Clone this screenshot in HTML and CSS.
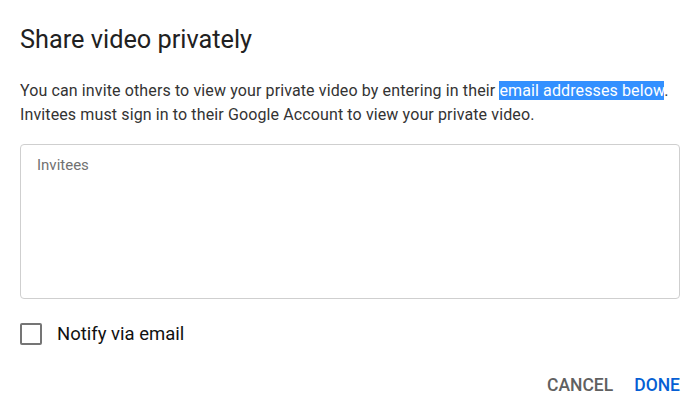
FILE: index.html
```html
<!DOCTYPE html>
<html lang="en">
<head>
  <meta charset="UTF-8" />
  <title>Share video privately</title>
  <link rel="stylesheet" href="styles.css">
</head>
<body>
  <div class="dialog">
    <h1 class="titulo">Share video privately</h1>
    <p class="descricao">You can invite others to view your private video by entering in their <span class="selecao">email addresses below</span>. Invitees must sign in to their Google Account to view your private video.</p>
    <div class="convidados">
      <textarea placeholder="Invitees"></textarea>
    </div>
    <label class="notificar">
      <span class="caixa"></span>
      <span>Notify via email</span>
    </label>
    <div class="acoes">
      <button class="cancelar">CANCEL</button>
      <button class="pronto">DONE</button>
    </div>
  </div>
</body>
</html>
```

FILE: styles.css
```css
body {
  margin: 0;
  background: #fff;
  font-family: Roboto, "Liberation Sans", Arial, sans-serif;
}

.dialog {
  padding: 24px 18px 0 20px;
}

.titulo {
  margin: 0;
  font-size: 25.3px;
  line-height: 32px;
  font-weight: 400;
  color: #212121;
}

.descricao {
  margin: 23px 0 0;
  font-size: 16px;
  letter-spacing: 0.12px;
  line-height: 24px;
  color: #333;
}

.selecao {
  background: #3390ff;
  color: #fff;
}

.convidados {
  margin-top: 17px;
  height: 155px;
  border: 1px solid #cfcfcf;
  border-radius: 4px;
  box-sizing: border-box;
  padding: 11px 16px;
}

.convidados textarea {
  width: 100%;
  height: 100%;
  border: none;
  outline: none;
  resize: none;
  padding: 0;
  font-family: inherit;
  font-size: 15px;
  line-height: 18px;
  color: #333;
}

.convidados textarea::placeholder {
  color: #717171;
}

.notificar {
  display: flex;
  align-items: center;
  gap: 15px;
  margin-top: 24px;
  font-size: 18.5px;
  color: #111;
}

.caixa {
  width: 18px;
  height: 18px;
  border: 2px solid #757575;
  border-radius: 2px;
}

.acoes {
  display: flex;
  justify-content: flex-end;
  gap: 21px;
  margin-top: 30px;
}

.acoes button {
  background: none;
  border: none;
  padding: 0;
  font-family: inherit;
  font-size: 17.5px;
  font-weight: 500;
  cursor: pointer;
}

.cancelar {
  color: #606060;
}

.pronto {
  color: #065fd4;
}
```
